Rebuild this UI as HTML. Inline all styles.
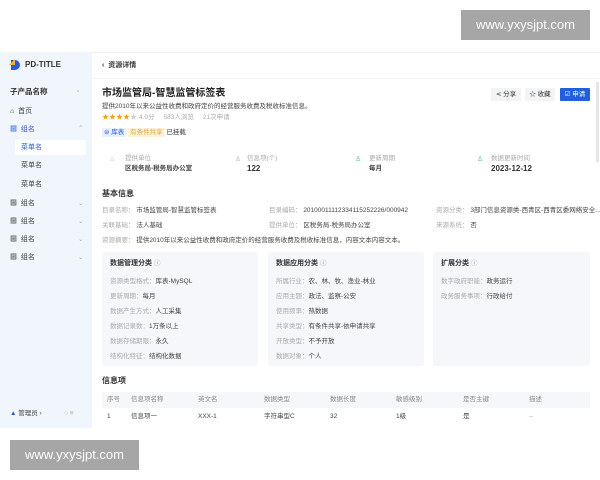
<!DOCTYPE html><html><head><meta charset="utf-8"><style>
*{margin:0;padding:0;box-sizing:border-box}
body{width:600px;height:480px;background:#fff;font-family:"Liberation Sans","Noto Sans CJK SC",sans-serif;position:relative;overflow:hidden;color:#333}
.a{position:absolute;white-space:nowrap;line-height:10px}
.side{position:absolute;left:0;top:52px;width:92px;height:376px;background:#f1f5fc}
.s{font-size:7px;color:#444}
.l{color:#aaa;font-size:6.5px}
.v{color:#444;font-size:6.5px}
.card{position:absolute;top:252px;height:114px;background:#f5f7fa;border-radius:3px}
.ct{font-size:7px;font-weight:bold;color:#333}
.wm{position:absolute;background:#a6a6a6;color:#fff;font-size:13px;text-align:center;line-height:29px}
</style></head><body>
<div class="wm" style="left:461px;top:10px;width:129px;height:30px">www.yxysjpt.com</div>
<div class="wm" style="left:10px;top:440px;width:129px;height:30px">www.yxysjpt.com</div>
<div class="side"></div>
<div class="a" style="left:92px;top:52px;width:508px;height:1px;background:#eee"></div>
<svg class="a" style="left:8px;top:58px" width="14" height="14"><path d="M3 2h4a5 5 0 010 10H3z" fill="#2a5bd7"/><path d="M1 7l6-6v6z" fill="#f0b43c"/></svg>
<div class="a" style="left:25px;top:60px;font-size:8px;font-weight:bold;color:#333">PD-TITLE</div>
<div class="a" style="left:10px;top:87px;font-size:7.5px;font-weight:bold">子产品名称</div>
<div class="a l" style="left:77px;top:87px">▫</div>
<div class="a s" style="left:10px;top:107px">⌂ &nbsp;首页</div>
<div class="a s" style="left:10px;top:125px;color:#2a5bd7">▩ &nbsp;组名</div><div class="a l" style="left:78px;top:124px">⌃</div>
<div class="a" style="left:15px;top:140px;width:71px;height:15px;background:#fff;border-radius:2px"></div>
<div class="a s" style="left:21px;top:143px;color:#2a5bd7">菜单名</div>
<div class="a s" style="left:21px;top:161px">菜单名</div>
<div class="a s" style="left:21px;top:180px">菜单名</div>
<div class="a s" style="left:10px;top:199px">▩ &nbsp;组名</div><div class="a l" style="left:78px;top:199px">⌄</div>
<div class="a s" style="left:10px;top:217px">▩ &nbsp;组名</div><div class="a l" style="left:78px;top:217px">⌄</div>
<div class="a s" style="left:10px;top:235px">▩ &nbsp;组名</div><div class="a l" style="left:78px;top:235px">⌄</div>
<div class="a s" style="left:10px;top:253px">▩ &nbsp;组名</div><div class="a l" style="left:78px;top:253px">⌄</div>
<div class="a s" style="left:10px;top:409px;font-size:6.5px"><span style="color:#2a5bd7">▲</span> 管理员 ›</div>
<div class="a l" style="left:64px;top:409px">○ ≡</div>
<div class="a" style="left:102px;top:61px;font-size:7px;font-weight:bold">‹ &nbsp;资源详情</div>
<div class="a" style="left:92px;top:78px;width:508px;height:1px;background:#f2f2f2"></div>
<div class="a" style="left:102px;top:88px;font-size:10px;line-height:12px;font-weight:bold;color:#222">市场监管局-智慧监管标签表</div>
<div class="a v" style="left:102px;top:102px">提供2010年以来公益性收费和政府定价的经营服务收费及税收标准信息。</div>
<div class="a" style="left:102px;top:113px;font-size:7px;color:#f0a020">★★★★<span style="color:#ccc">★</span> <span class="l">4.0分 &nbsp;&nbsp;&nbsp; 583人浏览 &nbsp;&nbsp;&nbsp; 21次申请</span></div>
<div class="a" style="left:102px;top:128px;font-size:6.5px"><span style="background:#e8f0fe;color:#2a5bd7;padding:1px 2px">⊜ 库表</span> <span style="background:#fdf3d8;color:#e3a83a;padding:1px 2px">有条件共享</span> <span>已挂载</span></div>
<div class="a" style="left:491px;top:88px;width:30px;height:13px;background:#f3f4f6;font-size:6.5px;line-height:13px;text-align:center">⋖ 分享</div>
<div class="a" style="left:525px;top:88px;width:30px;height:13px;background:#f3f4f6;font-size:6.5px;line-height:13px;text-align:center">☆ 收藏</div>
<div class="a" style="left:560px;top:88px;width:30px;height:13px;background:#1f5fe0;color:#fff;font-size:6.5px;line-height:13px;text-align:center;border-radius:1px">☑ 申请</div>
<div class="a" style="left:596px;top:82px;width:3px;height:80px;background:#e6e6e6"></div>
<div class="a" style="left:110px;top:155px;color:#f99;font-size:7px">⌂</div>
<div class="a l" style="left:125px;top:154px">提供单位</div><div class="a v" style="left:125px;top:164px;font-weight:bold">区税务局-税务局办公室</div>
<div class="a l" style="left:235px;top:155px">♙</div>
<div class="a l" style="left:247px;top:154px">信息项(个)</div><div class="a" style="left:247px;top:164px;font-size:8px;font-weight:bold">122</div>
<div class="a" style="left:355px;top:155px;color:#4c8;font-size:7px">♙</div>
<div class="a l" style="left:369px;top:154px">更新周期</div><div class="a v" style="left:369px;top:164px;font-weight:bold">每月</div>
<div class="a" style="left:477px;top:155px;color:#4c8;font-size:7px">♙</div>
<div class="a l" style="left:491px;top:154px">数据更新时间</div><div class="a" style="left:491px;top:164px;font-size:8px;font-weight:bold">2023-12-12</div>
<div class="a" style="left:102px;top:189px;font-size:8px;font-weight:bold">基本信息</div>
<div class="a" style="left:102px;top:206px;font-size:6.5px"><span class="l">目录名称：</span> <span class="v">市场监管局-智慧监管标签表</span></div>
<div class="a" style="left:269px;top:206px;font-size:6.5px"><span class="l">目录编码：</span> <span class="v">20100011112334115252226/000942</span></div>
<div class="a" style="left:436px;top:206px;font-size:6.5px"><span class="l">资源分类：</span> <span class="v">3部门信息资源类-西青区-西青区委网络安全...</span></div>
<div class="a" style="left:102px;top:221px;font-size:6.5px"><span class="l">关联基础：</span> <span class="v">法人基础</span></div>
<div class="a" style="left:269px;top:221px;font-size:6.5px"><span class="l">提供单位：</span> <span class="v">区税务局-税务局办公室</span></div>
<div class="a" style="left:436px;top:221px;font-size:6.5px"><span class="l">来源系统：</span> <span class="v">否</span></div>
<div class="a" style="left:102px;top:236px;font-size:6.5px"><span class="l">资源摘要：</span> <span class="v">提供2010年以来公益性收费和政府定价的经营服务收费及税收标准信息，内容文本内容文本。</span></div>
<div class="card" style="left:102px;width:156px"></div>
<div class="card" style="left:268px;width:156px"></div>
<div class="card" style="left:433px;width:157px"></div>
<div class="a ct" style="left:110px;top:259px">数据管理分类 <span class="l">ⓘ</span></div>
<div class="a ct" style="left:276px;top:259px">数据应用分类 <span class="l">ⓘ</span></div>
<div class="a ct" style="left:441px;top:259px">扩展分类 <span class="l">ⓘ</span></div>
<div class="a" style="left:110px;top:274px;font-size:6.5px;line-height:15px"><span class="l">资源类型格式：</span><span class="v">库表-MySQL</span><br><span class="l">更新周期：</span><span class="v">每月</span><br><span class="l">数据产生方式：</span><span class="v">人工采集</span><br><span class="l">数据记录数：</span><span class="v">1万条以上</span><br><span class="l">数据存储期限：</span><span class="v">永久</span><br><span class="l">结构化特征：</span><span class="v">结构化数据</span></div>
<div class="a" style="left:276px;top:274px;font-size:6.5px;line-height:15px"><span class="l">所属行业：</span><span class="v">农、林、牧、渔业-林业</span><br><span class="l">应用主题：</span><span class="v">政法、监察-公安</span><br><span class="l">使用频率：</span><span class="v">热数据</span><br><span class="l">共享类型：</span><span class="v">有条件共享-依申请共享</span><br><span class="l">开放类型：</span><span class="v">不予开放</span><br><span class="l">数据对象：</span><span class="v">个人</span></div>
<div class="a" style="left:441px;top:274px;font-size:6.5px;line-height:15px"><span class="l">数字政府职能：</span><span class="v">政务运行</span><br><span class="l">政务服务事项：</span><span class="v">行政给付</span></div>
<div class="a" style="left:102px;top:376px;font-size:8px;font-weight:bold">信息项</div>
<div class="a" style="left:102px;top:392px;width:488px;height:16px;background:#f5f7fa"></div>
<div class="a l" style="left:107px;top:395px;color:#888">序号</div><div class="a l" style="left:131px;top:395px;color:#888">信息项名称</div><div class="a l" style="left:198px;top:395px;color:#888">英文名</div><div class="a l" style="left:264px;top:395px;color:#888">数据类型</div><div class="a l" style="left:330px;top:395px;color:#888">数据长度</div><div class="a l" style="left:396px;top:395px;color:#888">敏感级别</div><div class="a l" style="left:463px;top:395px;color:#888">是否主键</div><div class="a l" style="left:529px;top:395px;color:#888">描述</div>
<div class="a v" style="left:107px;top:412px">1</div><div class="a v" style="left:131px;top:412px">信息项一</div><div class="a v" style="left:198px;top:412px">XXX-1</div><div class="a v" style="left:264px;top:412px">字符串型C</div><div class="a v" style="left:330px;top:412px">32</div><div class="a v" style="left:396px;top:412px">1级</div><div class="a v" style="left:463px;top:412px">是</div><div class="a l" style="left:529px;top:412px">--</div>
</body></html>
